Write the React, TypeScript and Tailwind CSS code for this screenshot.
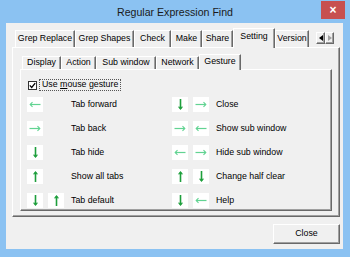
import React from 'react';

type Dir = 'l' | 'r' | 'u' | 'd';

function Arrow({ dir }: { dir: Dir }) {
  const horiz = dir === 'l' || dir === 'r';
  return (
    <div className="w-[16px] h-[15px] bg-white flex items-center justify-center">
      {horiz ? (
        <svg width="12" height="7" viewBox="0 0 12 7" className={dir === 'r' ? 'rotate-180' : ''}>
          <path d="M1 3.5H11.5" stroke="#62d392" strokeWidth="1.2" />
          <path d="M3.5 1.2L1.2 3.5L3.5 5.8" stroke="#62d392" strokeWidth="1.1" fill="none" />
        </svg>
      ) : (
        <svg width="5" height="11" viewBox="0 0 5 11" className={dir === 'u' ? 'rotate-180' : ''}>
          <path d="M2.5 0V10" stroke="#1e9f3c" strokeWidth="1.6" />
          <path d="M0.6 7.6L2.5 10L4.4 7.6" stroke="#1e9f3c" strokeWidth="1.2" fill="none" />
        </svg>
      )}
    </div>
  );
}

const gestures: { dirs: Dir[]; label: string }[] = [
  { dirs: ['l'], label: 'Tab forward' },
  { dirs: ['d', 'r'], label: 'Close' },
  { dirs: ['r'], label: 'Tab back' },
  { dirs: ['r', 'l'], label: 'Show sub window' },
  { dirs: ['d'], label: 'Tab hide' },
  { dirs: ['l', 'r'], label: 'Hide sub window' },
  { dirs: ['u'], label: 'Show all tabs' },
  { dirs: ['u', 'd'], label: 'Change half clear' },
  { dirs: ['d', 'u'], label: 'Tab default' },
  { dirs: ['d', 'l'], label: 'Help' },
];

const outerTabs = [
  { label: 'Grep Replace', w: 'w-[60px]' },
  { label: 'Grep Shapes', w: 'w-[59px]' },
  { label: 'Check', w: 'w-[37px]' },
  { label: 'Make', w: 'w-[31px]' },
  { label: 'Share', w: 'w-[31px]' },
  { label: 'Setting', w: 'w-[42px]', selected: true },
  { label: 'Version', w: 'w-[34px]' },
];

const innerTabs = [
  { label: 'Display', w: 'w-[39px]' },
  { label: 'Action', w: 'w-[35px]' },
  { label: 'Sub window', w: 'w-[60px]' },
  { label: 'Network', w: 'w-[43px]' },
  { label: 'Gesture', w: 'w-[42px]', selected: true },
];

const edge = 'border-t border-l border-t-white border-l-white border-r border-r-[#696969] shadow-[inset_-1px_0_0_#a0a0a0]';
const panel = 'border border-t-white border-l-white border-r-[#696969] border-b-[#696969] shadow-[inset_-1px_-1px_0_#a0a0a0]';

export default function App() {
  return (
    <div className="w-[350px] h-[257px] bg-[#8bc2f2] flex flex-col font-['Liberation_Sans',Arial,sans-serif] text-black text-[8.8px]">
      {/* title bar */}
      <div className="h-[23px] flex items-start pl-[29px]">
        <div className="flex-1 text-center text-[10.6px] text-[#1a1a1a] pt-[5px]">Regular Expression Find</div>
        <div className="w-[24px] h-[18px] mt-[1px] mr-[5px] bg-[#c75050] flex items-center justify-center text-white text-[12px] font-bold leading-none">×</div>
      </div>

      {/* client */}
      <div className="ml-[6px] w-[337px] h-[226px] bg-[#f0f0f0] pt-[5px] pl-[6px] flex flex-col">
        <div className="w-[328px] flex flex-col">
          {/* outer tabs */}
          <div className="flex items-end pl-[3px] h-[19px]">
            {outerTabs.map(t =>
              t.selected ? (
                <div key={t.label} className={`${t.w} h-[20px] -mb-[1px] relative z-10 bg-[#f0f0f0] ${edge} flex items-center justify-center pb-[3px]`}>
                  {t.label}
                </div>
              ) : (
                <div key={t.label} className={`${t.w} h-[17px] ${edge} flex items-center justify-center`}>
                  {t.label}
                </div>
              )
            )}
            <div className="ml-auto mr-[6px] self-start mt-[4px] flex">
              <div className={`w-[9px] h-[12px] ${panel} flex items-center justify-center`}>
                <svg width="4" height="6" viewBox="0 0 4 6"><path d="M4 0V6L0 3Z" fill="#000" /></svg>
              </div>
              <div className={`w-[9px] h-[12px] ${panel} flex items-center justify-center`}>
                <svg width="4" height="6" viewBox="0 0 4 6"><path d="M0 0V6L4 3Z" fill="#a0a0a0" /></svg>
              </div>
            </div>
          </div>

          {/* outer panel */}
          <div className={`h-[170px] ${panel} pt-[6px] pl-[7px]`}>
            {/* inner tabs */}
            <div className="flex items-end pl-[2px] h-[15px]">
              {innerTabs.map(t =>
                t.selected ? (
                  <div key={t.label} className={`${t.w} h-[16px] -mb-[1px] relative z-10 bg-[#f0f0f0] ${edge} flex items-center justify-center pb-[2px]`}>
                    {t.label}
                  </div>
                ) : (
                  <div key={t.label} className={`${t.w} h-[13px] ${edge} flex items-center justify-center`}>
                    {t.label}
                  </div>
                )
              )}
            </div>

            {/* inner panel */}
            <div className={`w-[312px] h-[142px] ${panel} pt-[9px]`}>
              <div className="flex items-center h-[12px] ml-[7px]">
                <div className="w-[9px] h-[9px] bg-white border border-[#333] flex items-center justify-center">
                  <svg width="7" height="7" viewBox="0 0 7 7">
                    <path d="M0.8 3.4L2.7 5.4L6.2 1.2" stroke="#000" strokeWidth="1.3" fill="none" />
                  </svg>
                </div>
                <div className="ml-[2px] h-[12px] px-[2px] border border-dotted border-[#555] flex items-center whitespace-pre">
                  Use <span className="underline">m</span>ouse gesture
                </div>
              </div>

              <div className="mt-[6px] ml-[6px] grid grid-cols-[145px_1fr] gap-y-[9px]">
                {gestures.map(g => (
                  <div key={g.label} className="flex items-center h-[15px]">
                    <div className="w-[16px]">{g.dirs[0] && <Arrow dir={g.dirs[0]} />}</div>
                    <div className="w-[16px] ml-[5px]">{g.dirs[1] && <Arrow dir={g.dirs[1]} />}</div>
                    <div className="ml-[7px]">{g.label}</div>
                  </div>
                ))}
              </div>
            </div>
          </div>

          <div className={`self-end mt-[7px] w-[67px] h-[20px] ${panel} flex items-center justify-center`}>Close</div>
        </div>
      </div>
    </div>
  );
}
